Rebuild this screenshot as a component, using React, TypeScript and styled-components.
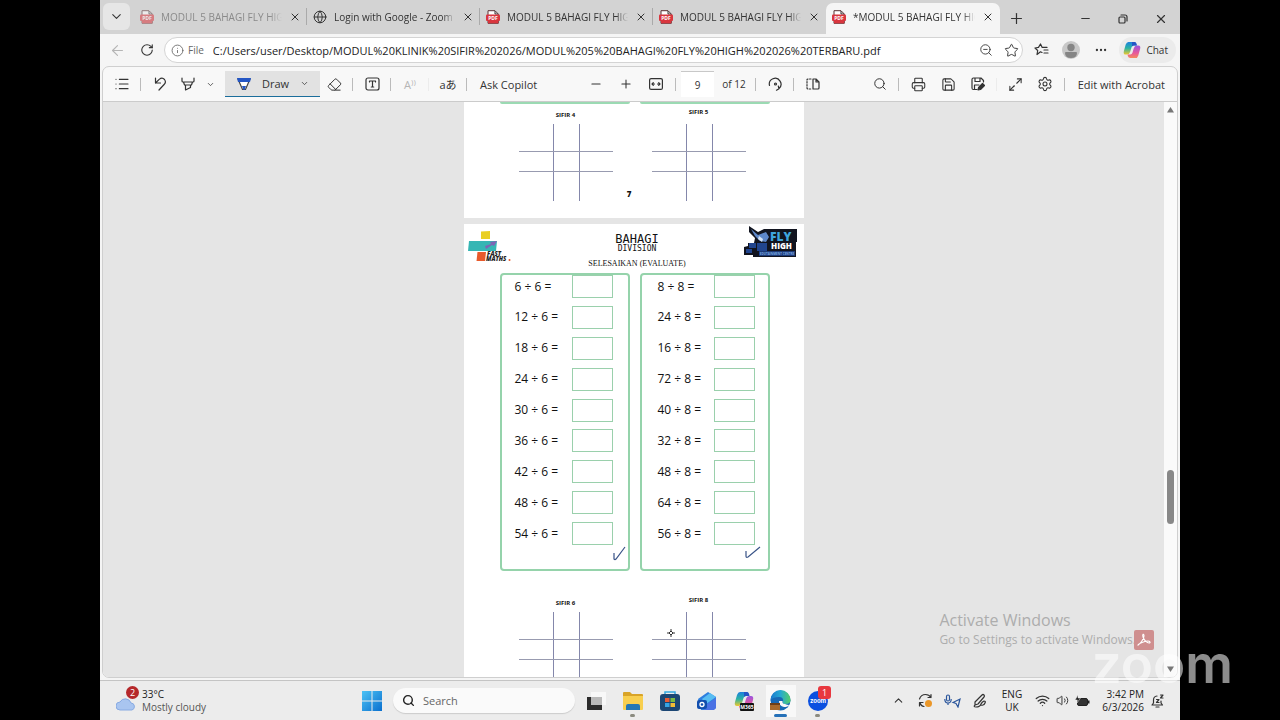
import React from "react";
import styled, { createGlobalStyle } from "styled-components";
import {
  ArrowLeft, ChevronDown, ChevronUp, Ellipsis, Eraser, Globe, Info, List,
  Maximize2, Minus, Plus, Printer, RotateCw, Save, Search, Settings, Star,
  Volume2, Wifi, X, ZoomOut,
} from "lucide-react";

const Global = createGlobalStyle`
  * { box-sizing: border-box; }
  body { margin: 0; background: #000; color: #333; font-family: "Open Sans", "Noto Sans", "Noto Sans CJK JP", sans-serif; font-size: 10px; }
  button, input { font: inherit; color: inherit; }
  button { border: 0; background: none; padding: 0; cursor: pointer; white-space: nowrap; }
  svg { display: block; flex: none; }
`;

const Stage = styled.div`
  position: relative;
  padding: 0 100px;
  background: #000;
`;

const Desktop = styled.div`
  display: flex;
  flex-direction: column;
  height: 100vh;
  background: #f5f5f5;
  overflow: hidden;
`;

/* Tab strip */
const TabStrip = styled.div`
  display: flex;
  align-items: stretch;
  height: 34px;
  padding: 3px 0 0 3px;
  background: #d3d3d3;
`;

const TabMenu = styled.button`
  display: grid;
  place-items: center;
  width: 27px;
  height: 27px;
  margin-right: 4px;
  border-radius: 6px;
  background: #e6e6e6;
`;

const Tab = styled.div<{ $active?: boolean; $muted?: boolean; $last?: boolean }>`
  position: relative;
  display: flex;
  align-items: center;
  flex: 0 1 ${(p) => (p.$active ? 174 : 173)}px;
  min-width: 0;
  padding: 0 6px 3px 6px;
  gap: 7px;
  border-radius: 7px 7px 0 0;
  background: ${(p) => (p.$active ? "#f5f5f5" : "transparent")};
  svg.doc { opacity: ${(p) => (p.$muted ? 0.55 : 1)}; }
  color: ${(p) => (p.$muted ? "#8a8a8a" : "#333")};
  &::after {
    content: "";
    position: absolute;
    right: 0;
    top: 5px;
    width: 1px;
    height: 17px;
    background: ${(p) => (p.$active || p.$last ? "transparent" : "#aaa")};
  }
`;

const TabTitle = styled.span`
  flex: 1;
  min-width: 0;
  overflow: hidden;
  white-space: nowrap;
  line-height: 16px;
  mask-image: linear-gradient(90deg, #000 90%, transparent 100%);
`;

const TabClose = styled.button`
  display: grid;
  place-items: center;
  width: 12px;
  height: 14px;
  color: #333;
`;

const WindowButtons = styled.div`
  display: flex;
  margin-left: auto;
`;

const IconButton = styled.button<{ $w?: number; $dim?: boolean }>`
  display: grid;
  place-items: center;
  flex: none;
  width: ${(p) => p.$w ?? 28}px;
  color: ${(p) => (p.$dim ? "#b5b5b5" : "#333")};
`;

/* Address row */
const AddressRow = styled.div`
  display: flex;
  align-items: stretch;
  height: 32px;
  padding: 3px 4px 3px 2px;
`;

const AddressBox = styled.div`
  display: flex;
  align-items: center;
  flex: 1;
  min-width: 0;
  margin: 0 3px 0 2px;
  padding: 0 0 0 6px;
  border: 1px solid #d4d4d4;
  border-radius: 13px;
  background: #fff;
  color: #666;
  gap: 4px;
`;

const AddressInput = styled.input`
  flex: 1;
  min-width: 0;
  margin-left: 5px;
  padding: 0;
  border: 0;
  outline: 0;
  background: none;
  color: #222;
  font-size: 11px;
`;

const ChatButton = styled.button`
  display: flex;
  align-items: center;
  gap: 5px;
  margin-left: 3px;
  padding: 0 8px 0 4px;
  border-radius: 13px;
  background: #ebebeb;
`;

const Panel = styled.div`
  display: flex;
  flex-direction: column;
  flex: 1;
  min-height: 0;
  margin: 0 2px 2px;
  border: 1px solid #cfcfcf;
  border-radius: 7px;
  background: #f8f8f8;
  overflow: hidden;
`;

/* PDF toolbar */
const Toolbar = styled.div`
  display: flex;
  align-items: stretch;
  flex: none;
  height: 35px;
  padding: 0 4px 0 5px;
  border-bottom: 1px solid #cbcbcb;
  font-size: 11px;
`;

const Group = styled.div<{ $grow?: boolean }>`
  display: flex;
  align-items: stretch;
  flex: ${(p) => (p.$grow ? "1" : "none")};
  padding-left: ${(p) => (p.$grow ? 36 : 0)}px;
`;

const Separator = styled.i<{ $faint?: boolean }>`
  flex: none;
  align-self: center;
  width: 1px;
  height: 13px;
  margin: 0 5px 0 4px;
  background: ${(p) => (p.$faint ? "#ececec" : "#bbb")};
`;

const DrawButton = styled.button`
  display: flex;
  align-items: center;
  justify-content: space-between;
  width: 95px;
  margin: 4px 0 4px 7px;
  padding: 0 11px 0 12px;
  border-bottom: 1px solid #1a6d9b;
  background: #e2e2e2;
`;

const TextButton = styled.button`
  padding: 0 8px;
`;

const PageInput = styled.input`
  width: 33px;
  margin: 4px 0;
  padding: 0;
  border: 0;
  border-top: 1px solid #c8c8c8;
  background: #fff;
  text-align: center;
  font-size: 10px;
`;

const PageCount = styled.label`
  display: flex;
  align-items: center;
  width: 37px;
  padding-left: 8px;
  font-size: 10px;
  white-space: nowrap;
`;

/* Document viewer */
const Viewer = styled.main`
  display: flex;
  flex: 1;
  min-height: 0;
  background: #e5e5e5;
`;

const Canvas = styled.div`
  position: relative;
  flex: 1;
  overflow: hidden;
  display: flex;
  flex-direction: column;
  align-items: center;
  gap: 6px;
`;

const Scrollbar = styled.div`
  display: flex;
  flex-direction: column;
  align-items: center;
  width: 13px;
  padding: 5px 0;
  background: #fafafa;
`;

const Track = styled.div`
  flex: 1;
  display: flex;
  flex-direction: column;
`;

const TrackSpace = styled.div<{ $part: number }>`
  flex: ${(p) => p.$part};
`;

const Thumb = styled.div`
  width: 7px;
  height: 54px;
  border-radius: 4px;
  background: #888;
`;

const Sheet = styled.section<{ $full?: boolean }>`
  flex: none;
  width: 340px;
  min-height: ${(p) => (p.$full ? 481 : 0)}px;
  padding-bottom: ${(p) => (p.$full ? 0 : 17)}px;
  background: #fff;
  color: #111;
`;

const CardRow = styled.div`
  display: grid;
  grid-template-columns: 1fr 1fr;
  gap: 10px;
  padding: 0 34px 0 36px;
`;

const CardTail = styled.div`
  height: 2px;
  border-bottom: 2px solid #9bdab3;
  border-radius: 0 0 3px 3px;
`;

const Card = styled.div<{ $inset?: boolean }>`
  position: relative;
  height: 298px;
  border: 2px solid #95d3ab;
  border-radius: 4px;
  padding: ${(p) => (p.$inset ? "0 13px 0 16px" : "0 15px 0 13px")};
`;

const Questions = styled.div`
  display: flex;
  flex-direction: column;
  justify-content: space-between;
  height: 270px;
`;

const Question = styled.label`
  display: flex;
  align-items: center;
  justify-content: space-between;
  font-size: 12px;
  line-height: 22px;
  white-space: nowrap;
`;

const Answer = styled.input`
  width: 41px;
  height: 23px;
  padding: 0 4px;
  border: 1px solid #9ad0ac;
  background: #fff;
`;

const Tick = styled.svg<{ $inset?: boolean }>`
  position: absolute;
  right: ${(p) => (p.$inset ? 7 : 2)}px;
  bottom: ${(p) => (p.$inset ? 10 : 8)}px;
`;

const SheetHeader = styled.header`
  display: flex;
  align-items: flex-start;
  justify-content: space-between;
  height: 49px;
  padding: 2px 6px 0 4px;
`;

const Titles = styled.div`
  display: flex;
  flex-direction: column;
  align-items: center;
  margin-left: 20px;
  padding-top: 7px;
  font-family: "DejaVu Sans Mono", monospace;
`;

const Title = styled.h1`
  margin: 0;
  font-size: 12px;
  line-height: 12px;
  font-weight: 400;
`;

const Subtitle = styled.div`
  font-size: 8px;
  line-height: 7px;
`;

const Instruction = styled.div`
  margin-top: 7px;
  font-family: "Liberation Serif", serif;
  font-size: 8px;
  line-height: 10px;
`;

const Figures = styled.div<{ $top: number }>`
  position: relative;
  display: flex;
  justify-content: space-between;
  align-items: flex-end;
  padding: ${(p) => p.$top}px 58px 0 55px;
`;

const Figure = styled.div<{ $gap: number }>`
  display: flex;
  flex-direction: column;
  align-items: center;
  gap: ${(p) => p.$gap}px;
  font-size: 6px;
  line-height: 8px;
  font-weight: 700;
`;

const SheetNumber = styled.span`
  margin-right: 6px;
  padding-bottom: 1px;
  font-size: 8px;
  line-height: 12px;
  font-weight: 800;
`;

const PenCursor = styled.svg`
  position: absolute;
  left: 203px;
  top: 58px;
`;

const Activation = styled.div`
  position: absolute;
  right: 28px;
  bottom: 28px;
  color: #adadad;
  font-size: 12px;
  line-height: 18px;
  white-space: nowrap;
`;

const ActivationTitle = styled.div`
  font-size: 16px;
  line-height: 22px;
`;

const AcrobatBadge = styled.button`
  position: absolute;
  right: 10px;
  bottom: 27px;
  display: grid;
  place-items: center;
  width: 20px;
  height: 20px;
  border-radius: 2px;
  background: #cf8f8f;
`;

const Watermark = styled.div`
  position: absolute;
  right: 47px;
  bottom: 24px;
  font-family: Inter, sans-serif;
  font-size: 53px;
  line-height: 64px;
  font-weight: 600;
  color: rgba(255, 255, 255, 0.55);
`;

/* Taskbar */
const Taskbar = styled.footer`
  display: flex;
  align-items: center;
  flex: none;
  height: 40px;
  padding: 0 10px 0 16px;
  border-top: 1px solid #c4c4c4;
  background: #ececec;
`;

const Weather = styled.button`
  position: relative;
  display: flex;
  align-items: center;
  gap: 6px;
  width: 246px;
  text-align: left;
  line-height: 13px;
  color: #555;
`;

const Strong = styled.div`
  color: #222;
`;

const Badge = styled.span<{ $square?: boolean }>`
  position: absolute;
  display: grid;
  place-items: center;
  width: 13px;
  height: 13px;
  top: ${(p) => (p.$square ? 1 : -2)}px;
  left: ${(p) => (p.$square ? 19 : 10)}px;
  border-radius: ${(p) => (p.$square ? 3 : 7)}px;
  background: ${(p) => (p.$square ? "#e8383f" : "#b5282b")};
  color: #fff;
  font-size: 9px;
  line-height: 13px;
`;

const SearchBox = styled.label`
  display: flex;
  align-items: center;
  gap: 8px;
  width: 182px;
  height: 25px;
  margin-left: 11px;
  padding-left: 9px;
  border-radius: 13px;
  background: #fafafa;
  box-shadow: 0 1px 1px #ccc;
  color: #222;
`;

const SearchInput = styled.input`
  width: 120px;
  padding: 0;
  border: 0;
  outline: 0;
  background: none;
  font-size: 11px;
  &::placeholder { color: #666; opacity: 1; }
`;

const Apps = styled.div`
  display: flex;
  margin-left: 2px;
`;

const AppButton = styled.button<{ $active?: boolean; $mark?: string }>`
  position: relative;
  display: grid;
  place-items: center;
  width: 37px;
  height: 32px;
  background: ${(p) => (p.$active ? "linear-gradient(#f8f8f8, #f8f8f8) center / 30px 32px no-repeat" : "none")};
  &::after {
    content: "";
    position: absolute;
    bottom: 0;
    width: ${(p) => (p.$active ? 13 : 5)}px;
    height: 3px;
    border-radius: 2px;
    background: ${(p) => p.$mark ?? "transparent"};
  }
`;

const Tray = styled.div`
  display: flex;
  align-items: center;
  margin-left: auto;
  line-height: 13px;
  color: #222;
`;

const Language = styled.button`
  width: 38px;
  text-align: center;
  line-height: 13px;
`;

const Clock = styled.button`
  width: 51px;
  text-align: right;
  line-height: 13px;
`;

const PdfIcon = () => (
  <svg className="doc" width="14" height="14" viewBox="0 0 14 14">
    <path d="M2 .7h7l3.300 3.300v9.300H2z" fill="#fff" stroke="#5b3033" />
    <path d="M9 1v3h3" fill="none" stroke="#333" />
    <path d="M2 11h10.300v2.300H2z" fill="#d9363e" />
    <rect x="0" y="4.500" width="14" height="6.500" rx="1" fill="#d9363e" />
    <text x="7" y="9.700" textAnchor="middle" fontSize="5" fontWeight="700" fill="#fff" fontFamily="Open Sans">PDF</text>
  </svg>
);

const CopilotIcon = ({ size = 18, label }: { size?: number; label?: string }) => (
  <svg width={size} height={size} viewBox="0 0 20 20">
    <defs>
      <linearGradient id="cpA" x1="0" y1="0" x2="0" y2="1"><stop offset="0" stopColor="#1b7fe0" /><stop offset=".5" stopColor="#2bb3a2" /><stop offset="1" stopColor="#f0c72c" /></linearGradient>
      <linearGradient id="cpB" x1="0" y1="0" x2="0" y2="1"><stop offset="0" stopColor="#9a53df" /><stop offset=".6" stopColor="#e8589a" /><stop offset="1" stopColor="#f68a5a" /></linearGradient>
    </defs>
    <path d="M6 1h6q2 0 2.500 2l.5 2h-3q-2 0-2.500 2L8 12q-.8 3-3.500 3H3q-3 0-2-4L3 4q1-3 3-3z" fill="url(#cpA)" />
    <path d="M14 19H8q-2 0-2.500-2L5 15h3q2 0 2.500-2L12 8q.8-3 3.500-3H17q3 0 2 4l-2 7q-1 3-3 3z" fill="url(#cpB)" />
    <path d="M10 1h3q2 0 2.500 4H12q-1 0-2 1z" fill="#2454c6" />
    {label && <rect x="6" y="12" width="14" height="8" rx="1" fill="#111" />}
    {label && <text x="13" y="18" textAnchor="middle" fontSize="5" fontWeight="700" fill="#fff" fontFamily="Open Sans">{label}</text>}
  </svg>
);

const stroke = { fill: "none", stroke: "currentColor", strokeWidth: 1.2, strokeLinecap: "round", strokeLinejoin: "round" } as const;

const UndoIcon = () => (
  <svg width="13" height="14" viewBox="0 0 13 14" {...stroke}>
    <path d="M1.500 1v5h5M1.500 6l3.700-3.600q3-2.400 5.300.1 2 2.700-.4 5L5 13" />
  </svg>
);

const HighlighterIcon = () => (
  <svg width="14" height="14" viewBox="0 0 14 14" {...stroke}>
    <path d="M1 1v3q0 1 1 1h10q1 0 1-1V1M2.500 5l1 3h7l1-3M4.500 8v5l5-2.500V8" />
  </svg>
);

const PenIcon = () => (
  <svg width="14" height="14" viewBox="0 0 14 14">
    <path d="M1 2h12L8.500 12.500h-3z" fill="#fff" stroke="#444" strokeWidth="1.200" />
    <path d="M0 1h14l-1 4H1z" fill="#2456c4" />
    <path d="M5 9h4l-1.500 4h-1z" fill="#2456c4" />
  </svg>
);

const TextBoxIcon = () => (
  <svg width="15" height="14" viewBox="0 0 15 14" {...stroke}>
    <rect x="1" y="1" width="13" height="12" rx="2" />
    <path d="M4.500 5V4h6v1M7.500 4v6M6.300 10h2.400" />
  </svg>
);

const FitWidthIcon = () => (
  <svg width="14" height="12" viewBox="0 0 14 12" {...stroke}>
    <rect x=".6" y=".6" width="12.800" height="10.800" rx="1.500" />
    <path d="M3 6h2.500M8.500 6H11M4.300 4.700L3 6l1.300 1.300M9.700 4.700L11 6 9.700 7.300" />
  </svg>
);

const PageViewIcon = () => (
  <svg width="14" height="12" viewBox="0 0 14 12" {...stroke}>
    <path d="M7 1h3l3 3v6q0 1-1 1H7zM10 1v3h3" />
    <path d="M5 1H2Q1 1 1 2v8q0 1 1 1h3" strokeDasharray="1.500 1.500" />
  </svg>
);

const RotateIcon = () => (
  <svg width="15" height="14" viewBox="0 0 15 14" {...stroke}>
    <path d="M1.500 8.500A5.800 5.800 0 1 1 11 11.500M8.500 13.200L11 11.800 10.300 9" />
    <circle cx="7.500" cy="7" r="1" />
  </svg>
);

const FavoritesIcon = () => (
  <svg width="15" height="14" viewBox="0 0 15 14" {...stroke}>
    <path d="M8 9.500l-1.500-.7L3 11.500l.7-4L1 5l3.500-.6L6.500 1l1.700 3.400H13M10 7h4M10 10h4" />
  </svg>
);

const Avatar = () => (
  <svg width="18" height="18" viewBox="0 0 18 18">
    <circle cx="9" cy="9" r="9" fill="#c8c8c8" />
    <circle cx="9" cy="6.500" r="3.700" fill="#858585" />
    <path d="M3 12q0-1 1-1h10q1 0 1 1 0 5-6 5t-6-5z" fill="#858585" />
  </svg>
);

const FastMathsLogo = () => (
  <svg width="43" height="36" viewBox="0 0 43 36">
    <path d="M13 5.500l9-.5v8h-9z" fill="#e9cf25" />
    <path d="M1 15h28l-1 10H0z" fill="#35b6b4" />
    <path d="M17 20l6-2-1-2 7-1-3 5-2-1-6 4z" fill="#7d65b5" />
    <path d="M9.500 26h8.500l-1 9H8.500z" fill="#e85a2b" />
    <text x="19" y="30" fontSize="6" fontWeight="800" fontStyle="italic" fill="#222" fontFamily="Open Sans">FAST</text>
    <text x="18" y="35" fontSize="6" fontWeight="800" fontStyle="italic" fill="#222" fontFamily="Open Sans">MATHS</text>
    <circle cx="41.500" cy="34" r="1" fill="#e85a2b" />
  </svg>
);

const FlyHighLogo = () => (
  <svg width="54" height="32" viewBox="0 0 54 32">
    <path d="M5 0l9 6 6-3h33v13h-1v15H9v-2H0v-8l4-1v-3h6l1-5-6-6z" fill="#11141f" />
    <path d="M7 3l7 6 8-3 3 5-3 5-6-1-5-5z" fill="#5d87c9" />
    <path d="M15 10l4 3-1 3-4-3z" fill="#d5e3f5" />
    <path d="M13 17h10v8H13zM5 17h7v5H5zM2 23h6v4H2z" fill="#21458f" />
    <text x="26" y="15" fontSize="12" fontWeight="800" fill="#3fa5de" fontFamily="Open Sans">FLY</text>
    <text x="27" y="23" fontSize="8" fontWeight="800" fill="#fff" fontFamily="Open Sans">HIGH</text>
    <rect x="15" y="25" width="36" height="5" fill="#1c3975" />
    <text x="33" y="29" textAnchor="middle" fontSize="3" fontWeight="700" fill="#7caee6" fontFamily="Open Sans">EDUTAINMENT CENTRE</text>
  </svg>
);

const SifirGrid = () => (
  <svg width="94" height="77" viewBox="0 0 94 77" stroke="#8487ab" strokeWidth="1">
    <path d="M34.500 0v77M60.500 0v77" />
    <path d="M0 27.500h94M0 47.500h94" stroke="#989bb0" />
  </svg>
);

const questionSets = [
  { by: 6, numbers: [6, 12, 18, 24, 30, 36, 42, 48, 54] },
  { by: 8, numbers: [8, 24, 16, 72, 40, 32, 48, 64, 56] },
];

const tabs = [
  { title: "MODUL 5 BAHAGI FLY HIGH", muted: true },
  { title: "Login with Google - Zoom", web: true },
  { title: "MODUL 5 BAHAGI FLY HIGH" },
  { title: "MODUL 5 BAHAGI FLY HIGH", last: true },
  { title: "*MODUL 5 BAHAGI FLY HIGH", active: true },
];

export default function App() {
  return (
    <Stage>
      <Global />
      <Desktop>
        <TabStrip>
          <TabMenu aria-label="Tab menu"><ChevronDown size={15} strokeWidth={1.7} /></TabMenu>
          {tabs.map((t, i) => (
            <Tab key={i} $active={t.active} $muted={t.muted} $last={t.last}>
              {t.web ? <Globe size={14} strokeWidth={1.7} /> : <PdfIcon />}
              <TabTitle>{t.title}</TabTitle>
              <TabClose aria-label="Close tab"><X size={12} strokeWidth={2} /></TabClose>
            </Tab>
          ))}
          <IconButton $w={32} aria-label="New tab"><Plus size={17} strokeWidth={1.7} /></IconButton>
          <WindowButtons>
            <IconButton $w={38} aria-label="Minimise"><Minus size={13} strokeWidth={2} /></IconButton>
            <IconButton $w={38} aria-label="Restore">
              <svg width="10" height="10" viewBox="0 0 10 10" {...stroke}><rect x="1" y="3" width="6" height="6" rx="1" /><path d="M3 1h4q2 0 2 2v4" /></svg>
            </IconButton>
            <IconButton $w={38} aria-label="Close window"><X size={14} strokeWidth={2} /></IconButton>
          </WindowButtons>
        </TabStrip>

        <AddressRow>
          <IconButton $w={30} $dim aria-label="Back"><ArrowLeft size={17} strokeWidth={1.6} /></IconButton>
          <IconButton $w={30} aria-label="Reload"><RotateCw size={14} strokeWidth={1.9} /></IconButton>
          <AddressBox>
            <Info size={13} strokeWidth={1.6} />
            <span>File</span>
            <AddressInput
              aria-label="Address"
              defaultValue="C:/Users/user/Desktop/MODUL%20KLINIK%20SIFIR%202026/MODUL%205%20BAHAGI%20FLY%20HIGH%202026%20TERBARU.pdf"
            />
            <IconButton $w={20} aria-label="Zoom out"><ZoomOut size={14} strokeWidth={1.5} /></IconButton>
            <IconButton $w={22} aria-label="Add favourite"><Star size={15} strokeWidth={1.5} /></IconButton>
          </AddressBox>
          <IconButton $w={30} aria-label="Favourites"><FavoritesIcon /></IconButton>
          <IconButton $w={30} aria-label="Profile"><Avatar /></IconButton>
          <IconButton $w={30} aria-label="More"><Ellipsis size={14} /></IconButton>
          <ChatButton><CopilotIcon /> Chat</ChatButton>
        </AddressRow>

        <Panel>
          <Toolbar>
            <Group>
              <IconButton aria-label="Contents"><List size={16} strokeWidth={1.7} /></IconButton>
              <Separator />
              <IconButton aria-label="Undo"><UndoIcon /></IconButton>
              <IconButton aria-label="Highlight"><HighlighterIcon /></IconButton>
              <IconButton $w={16} aria-label="Highlight colours"><ChevronDown size={9} /></IconButton>
              <DrawButton><PenIcon /> Draw <ChevronDown size={9} /></DrawButton>
              <IconButton aria-label="Erase"><Eraser size={15} strokeWidth={1.6} /></IconButton>
              <Separator />
              <IconButton aria-label="Add text"><TextBoxIcon /></IconButton>
              <Separator />
              <IconButton $dim aria-label="Read aloud">A⁾⁾</IconButton>
              <Separator $faint />
              <IconButton aria-label="Translate">aあ</IconButton>
              <Separator />
              <TextButton>Ask Copilot</TextButton>
            </Group>
            <Group $grow>
              <IconButton $w={30} aria-label="Zoom out"><Minus size={14} strokeWidth={1.8} /></IconButton>
              <IconButton $w={30} aria-label="Zoom in"><Plus size={14} strokeWidth={1.8} /></IconButton>
              <IconButton $w={30} aria-label="Fit to width"><FitWidthIcon /></IconButton>
              <Separator />
              <PageInput id="page" defaultValue="9" />
              <PageCount htmlFor="page">of 12</PageCount>
              <Separator />
              <IconButton aria-label="Rotate"><RotateIcon /></IconButton>
              <Separator />
              <IconButton aria-label="Page view"><PageViewIcon /></IconButton>
            </Group>
            <Group>
              <IconButton aria-label="Search"><Search size={14} strokeWidth={1.7} /></IconButton>
              <Separator />
              <IconButton $w={30} aria-label="Print"><Printer size={15} strokeWidth={1.7} /></IconButton>
              <IconButton $w={30} aria-label="Save"><Save size={15} strokeWidth={1.7} /></IconButton>
              <IconButton aria-label="Save as">
                <svg width="14" height="14" viewBox="0 0 14 14" {...stroke}>
                  <path d="M6 12.500H2.500q-1.500 0-1.500-1.500V2.500Q1 1 2.500 1H10l2.500 2.500V5M4 1v3.500h5V1M3.500 12V8H8" />
                  <path d="M7 13l.6-2.500L11.500 6.500l2 2L9.500 12.500z" fill="currentColor" />
                </svg>
              </IconButton>
              <Separator $faint />
              <IconButton aria-label="Full screen"><Maximize2 size={15} strokeWidth={1.7} /></IconButton>
              <IconButton $w={30} aria-label="Settings"><Settings size={16} strokeWidth={1.6} /></IconButton>
              <Separator />
              <TextButton>Edit with Acrobat</TextButton>
            </Group>
          </Toolbar>

          <Viewer>
            <Canvas>
              <Sheet>
                <CardRow><CardTail /><CardTail /></CardRow>
                <Figures $top={4}>
                  <Figure $gap={5}>SIFIR 4<SifirGrid /></Figure>
                  <SheetNumber>7</SheetNumber>
                  <Figure $gap={8}>SIFIR 5<SifirGrid /></Figure>
                </Figures>
              </Sheet>
              <Sheet $full>
                <SheetHeader>
                  <FastMathsLogo />
                  <Titles>
                    <Title>BAHAGI</Title>
                    <Subtitle>DIVISION</Subtitle>
                    <Instruction>SELESAIKAN (EVALUATE)</Instruction>
                  </Titles>
                  <FlyHighLogo />
                </SheetHeader>
                <CardRow>
                  {questionSets.map((set, i) => (
                    <Card key={set.by} $inset={i === 1}>
                      <Questions>
                        {set.numbers.map((n) => (
                          <Question key={n}>{`${n} ÷ ${set.by} =`}<Answer type="text" /></Question>
                        ))}
                      </Questions>
                      <Tick $inset={i === 1} width={i ? 16 : 13} height={i ? 13 : 15} viewBox={i ? "0 0 16 13" : "0 0 13 15"} fill="none" stroke="#3a5488" strokeWidth="1.200">
                        <path d={i ? "M1 5v5q0 2 2 1L15 1" : "M1 7v6q1 1 2 0L12 1"} />
                      </Tick>
                    </Card>
                  ))}
                </CardRow>
                <Figures $top={25}>
                  <Figure $gap={5}>SIFIR 6<SifirGrid /></Figure>
                  <Figure $gap={8}>SIFIR 8<SifirGrid /></Figure>
                  <PenCursor width="8" height="8" viewBox="0 0 8 8" fill="none" stroke="#333">
                    <path d="M4 0v2M4 6v2M0 4h2M6 4h2M4 2l2 2-2 2-2-2z" />
                  </PenCursor>
                </Figures>
              </Sheet>
              <Activation>
                <ActivationTitle>Activate Windows</ActivationTitle>
                Go to Settings to activate Windows.
              </Activation>
              <AcrobatBadge aria-label="Open in Acrobat">
                <svg width="14" height="14" viewBox="0 0 14 14" fill="none" stroke="#fff" strokeWidth="1.100">
                  <path d="M1 12c2-1 6-6 6-9 0-3-2-2-1 1s4 6 6 6 1-2-1-2c-3 0-8 2-9.500 3.500-.5.500-.5 1-.5.500z" />
                </svg>
              </AcrobatBadge>
            </Canvas>
            <Scrollbar>
              <svg width="7" height="6" viewBox="0 0 7 6"><path d="M3.500 0L7 5.500H0z" fill="#777" /></svg>
              <Track>
                <TrackSpace $part={359} />
                <Thumb />
                <TrackSpace $part={143} />
              </Track>
              <svg width="7" height="6" viewBox="0 0 7 6"><path d="M3.500 6L7 .5H0z" fill="#777" /></svg>
            </Scrollbar>
          </Viewer>
        </Panel>

        <Taskbar>
          <Weather>
            <svg width="20" height="24" viewBox="0 0 20 24"><path d="M4 21a4 4 0 0 1 0-8 6 6 0 0 1 11 1 3.600 3.600 0 0 1 1 7z" fill="#a9c5f0" stroke="#88aae2" /></svg>
            <Badge>2</Badge>
            <span><Strong>33°C</Strong>Mostly cloudy</span>
          </Weather>
          <IconButton $w={20} aria-label="Start">
            <svg width="20" height="20" viewBox="0 0 20 20">
              <defs><linearGradient id="win" x1="0" y1="0" x2="1" y2="1"><stop offset="0" stopColor="#4cc3f5" /><stop offset="1" stopColor="#0a6fce" /></linearGradient></defs>
              <path d="M0 0h9.500v9.500H0zM10.500 0H20v9.500h-9.500zM0 10.500h9.500V20H0zM10.500 10.500H20V20h-9.500z" fill="url(#win)" />
            </svg>
          </IconButton>
          <SearchBox><Search size={13} strokeWidth={2.6} /><SearchInput aria-label="Search" placeholder="Search" /></SearchBox>
          <Apps>
            <AppButton aria-label="Task view">
              <svg width="20" height="18" viewBox="0 0 20 18"><path d="M5 0h15v13H5z" fill="#f8f8f8" /><path d="M1 5h15v13H1z" fill="#2b2b2b" /><path d="M5 5h11v8H5z" fill="#b9b9b9" /></svg>
            </AppButton>
            <AppButton $mark="#8b8b80" aria-label="File Explorer">
              <svg width="20" height="18" viewBox="0 0 20 18"><path d="M0 1q0-1 1-1h6l2 2h10q1 0 1 1v14H0z" fill="#d9a428" /><path d="M0 4h20v13q0 1-1 1H1q-1 0-1-1z" fill="#f8cf4f" /><path d="M3 18v-4q0-2 2-2h10q2 0 2 2v4z" fill="#2477b5" /></svg>
            </AppButton>
            <AppButton aria-label="Store">
              <svg width="20" height="20" viewBox="0 0 20 20"><path d="M5 4V1h10v3" fill="none" stroke="#32a8df" strokeWidth="1.500" /><rect y="3" width="20" height="17" rx="3" fill="#1c4774" /><path d="M5 7h4.500v4H5z" fill="#e85b35" /><path d="M10.500 7H15v4h-4.500z" fill="#7bbb42" /><path d="M5 12h4.500v4H5z" fill="#35a4e4" /><path d="M10.500 12H15v4h-4.500z" fill="#f2bd36" /></svg>
            </AppButton>
            <AppButton aria-label="Outlook">
              <svg width="20" height="18" viewBox="0 0 20 18"><path d="M1 7l10-7 8 5v11l-3 2H4z" fill="#2d7fdf" /><path d="M5 7l8-6 6 4-10 7z" fill="#58bdf2" /><path d="M7 14l12-8v10l-2 2H7z" fill="#4b72e4" /><rect y="8" width="10" height="9" rx="2" fill="#124fae" /><circle cx="5" cy="12.500" r="2" fill="none" stroke="#fff" strokeWidth="1.300" /></svg>
            </AppButton>
            <AppButton aria-label="Microsoft 365 Copilot"><CopilotIcon size={20} label="M365" /></AppButton>
            <AppButton $active $mark="#2671b8" aria-label="Edge">
              <svg width="21" height="21" viewBox="0 0 21 21">
                <defs><linearGradient id="edge" x1="0" y1="0" x2="1" y2="0"><stop offset="0" stopColor="#1879cf" /><stop offset=".5" stopColor="#25a9d1" /><stop offset="1" stopColor="#55cf67" /></linearGradient></defs>
                <circle cx="10.500" cy="10.500" r="10" fill="#1768b5" />
                <path d="M.5 10A10 10 0 0 1 20.500 10q0 4-5 4-3 0-2.500-2 1-5-4-5-6 0-8.500 3z" fill="url(#edge)" />
                <path d="M9 11q0 5 5 6 4 0 5-2-2 0-4-1-3 0-2.500-3z" fill="#f8f8f8" />
                <path d="M0 13h10v7H0z" fill="#a8692b" /><path d="M0 13h10v2H0z" fill="#6d3e17" />
              </svg>
            </AppButton>
            <AppButton $mark="#8b8b80" aria-label="Zoom">
              <svg width="20" height="20" viewBox="0 0 20 20"><circle cx="10" cy="10" r="10" fill="#0b50e0" /><text x="10" y="12" textAnchor="middle" fontSize="6" fontWeight="700" fill="#fff" fontFamily="Inter">zoom</text></svg>
              <Badge $square>1</Badge>
            </AppButton>
          </Apps>
          <Tray>
            <IconButton $w={27} aria-label="Hidden icons"><ChevronUp size={13} /></IconButton>
            <IconButton $w={27} aria-label="Update">
              <svg width="15" height="15" viewBox="0 0 15 15" {...stroke}><path d="M1.500 6Q3 1.500 7.500 1.500q3.500 0 5.500 3M13 1.500v3h-3M1.500 13V9.500H5M2 10q1 3 4 3.500" /><circle cx="10.500" cy="10.500" r="3.500" fill="#eb9728" stroke="none" /></svg>
            </IconButton>
            <IconButton $w={27} aria-label="Microphone and location">
              <svg width="17" height="14" viewBox="0 0 17 14" fill="none" stroke="#2b569c" strokeWidth="1.200"><rect x="2.500" y="1" width="3" height="6" rx="1.500" /><path d="M.8 5q0 4 3.200 4t3.200-4M4 9v2M9 8.500L16 5l-2 8-2-3.500z" /></svg>
            </IconButton>
            <IconButton $w={27} aria-label="Pen">
              <svg width="14" height="15" viewBox="0 0 14 15" {...stroke}><path d="M2 9l7-7q1-1 2 0t0 2L5 11l-3 1zM2 12q-2 2 1 2 4 0 5-3 1-2 3-3 2 0 1 2-1 3-4 2" /></svg>
            </IconButton>
            <Language>ENG<br />UK</Language>
            <IconButton $w={22} aria-label="Network"><Wifi size={15} /></IconButton>
            <IconButton $w={18} aria-label="Volume"><Volume2 size={13} strokeWidth={1.8} /></IconButton>
            <IconButton $w={22} aria-label="Battery">
              <svg width="15" height="12" viewBox="0 0 15 12"><rect x="2.500" y="3.500" width="10" height="7" rx="1.500" fill="#333" stroke="#222" /><path d="M13 5.500h1.500v3H13z" fill="#222" /><path d="M3 0L0 5h2.500L2 8l3.500-5H3z" fill="#222" stroke="#ececec" strokeWidth=".5" /></svg>
            </IconButton>
            <Clock>3:42 PM<br />6/3/2026</Clock>
            <IconButton $w={26} aria-label="Notifications">
              <svg width="13" height="14" viewBox="0 0 13 14" {...stroke}><path d="M6 2Q2.500 2.500 2.500 6v3L1 11h10.500L10 9V7M5 13h3M5.500 5.500H8L5.500 8.500H8M9.500 1H12L9.500 4H12" /></svg>
            </IconButton>
          </Tray>
        </Taskbar>
      </Desktop>
      <Watermark>zoom</Watermark>
    </Stage>
  );
}
